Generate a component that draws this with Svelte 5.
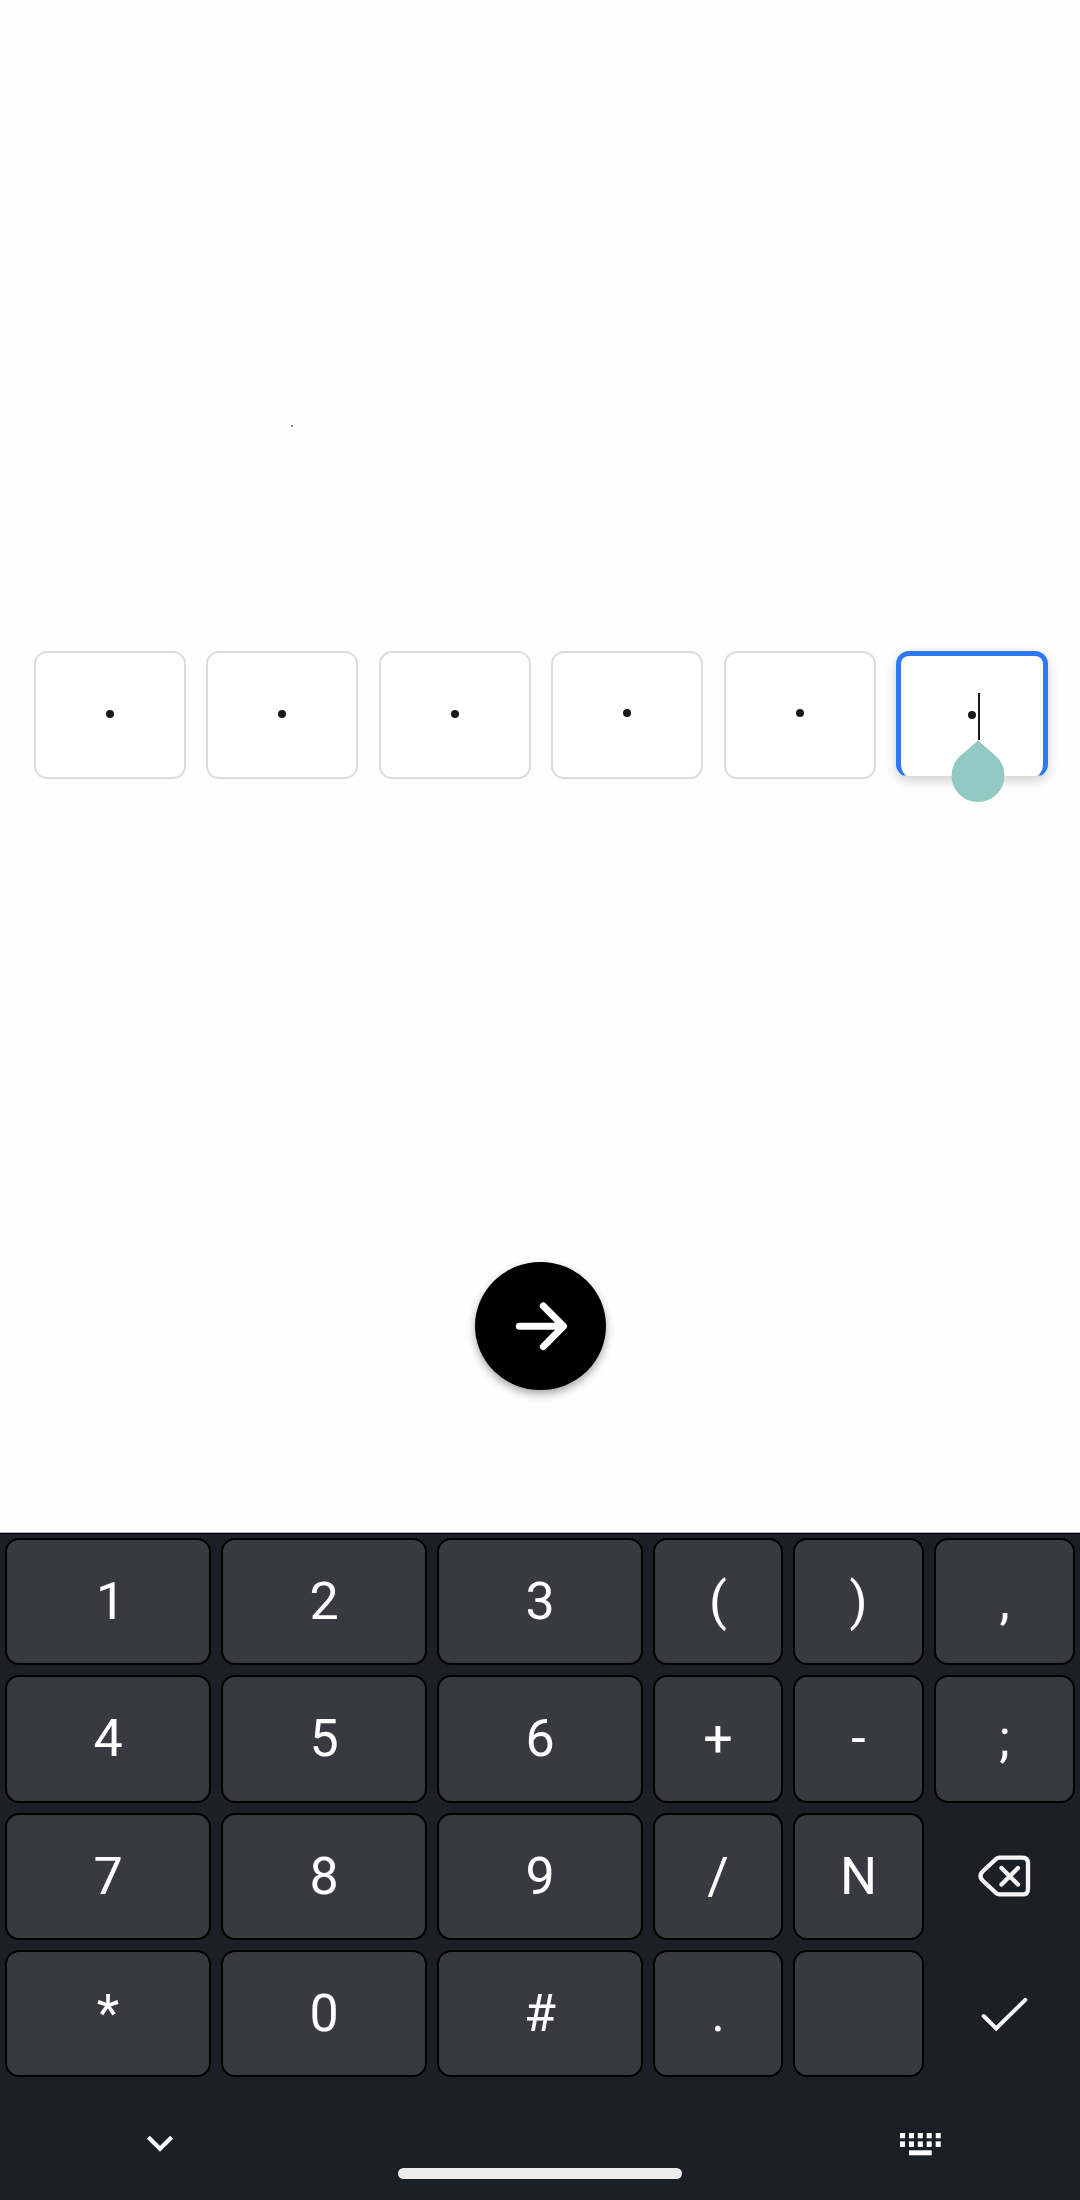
<script>
  // Cells whose dot sits one pixel above the others.
  const raised = [false, false, false, true, true, false];

  const keys = [
    '1', '2', '3', '(', ')', ',',
    '4', '5', '6', '+', '-', ';',
    '7', '8', '9', '/', 'N', 'backspace',
    '*', '0', '#', '.', '', 'done'
  ];

  const dotColumns = [0, 9, 17.8, 26.7, 35.7];
</script>

<main class="screen">
  <section class="form">
    <div class="message"><span class="speck"></span></div>

    <div class="code">
      {#each raised as up, i}
        <div class="cell" class:active={i === raised.length - 1}>
          <span class="dot" class:up></span>
          {#if i === raised.length - 1}
            <span class="caret"></span>
            <svg class="handle" width="54" height="63" viewBox="0 0 54 63">
              <path d="M27 .5 45.740 16.760A26.5 26.5 0 1 1 8.260 16.760Z" fill="#92c9c3" />
            </svg>
          {/if}
        </div>
      {/each}
    </div>

    <button class="next" aria-label="Next">
      <svg width="60" height="60" viewBox="0 0 60 60">
        <path d="M8.3 30.3H52M32.3 10l20.2 20.3-20.2 20.3" />
      </svg>
    </button>
  </section>

  <section class="keyboard">
    <div class="keys">
      {#each keys as key}
        {#if key === 'backspace'}
          <button class="key plain" aria-label="Backspace">
            <svg width="54" height="44" viewBox="0 0 54 44">
              <path d="M21.5 3.6H44.5Q50 3.6 50 9.1V34.9Q50 40.4 44.5 40.4H21.5Q19.500 40.4 18 39L4.600 26.500Q.400 22 4.600 17.500L18 5Q19.500 3.600 21.500 3.600Z" />
              <path d="M23.500 14l16.500 16.500M40 14l-16.500 16.500" />
            </svg>
          </button>
        {:else if key === 'done'}
          <button class="key plain" aria-label="Done">
            <svg width="54" height="44" viewBox="0 0 54 44">
              <path class="check" d="M5.700 24 18.200 36.500 47.300 7.800" />
            </svg>
          </button>
        {:else}
          <button class="key" class:one={key === '1'}>{key}</button>
        {/if}
      {/each}
    </div>

    <div class="toolbar">
      <svg width="30" height="20" viewBox="0 0 30 20">
        <path class="chevron" d="M3.300 3.300 15 14.700 26.700 3.300" />
      </svg>
      <svg class="switcher" width="41" height="23" viewBox="0 0 41 23">
        {#each dotColumns as x}
          <rect {x} y="0" width="5" height="5.300" />
          <rect {x} y="8.400" width="5" height="5.500" />
        {/each}
        <rect x="9" y="17.300" width="22.700" height="5" />
      </svg>
    </div>
    <div class="home"></div>
  </section>
</main>

<style>
  :global(body) {
    margin: 0;
    background: #fefefe;
  }

  .screen {
    display: flex;
    flex-direction: column;
    width: 1080px;
    height: 2200px;
    overflow: hidden;
    background: #fefefe;
    font-family: Roboto, sans-serif;
  }

  button {
    margin: 0;
    padding: 0;
    border: 0;
    font: inherit;
  }

  .form {
    display: flex;
    flex-direction: column;
    align-items: center;
    box-sizing: border-box;
    height: 1532px;
  }

  .message {
    box-sizing: border-box;
    width: 100%;
    height: 651px;
    padding: 425px 0 0 291px;
  }

  .speck {
    display: block;
    width: 2px;
    height: 2px;
    background: #888;
  }

  .code {
    display: grid;
    grid-template-columns: repeat(6, 1fr);
    column-gap: 20.700px;
    width: 1014px;
    height: 128px;
    margin-left: 2px;
  }

  .cell {
    position: relative;
    display: flex;
    align-items: center;
    justify-content: center;
    box-sizing: border-box;
    height: 128px;
    border: 2px solid #dcdcdc;
    border-radius: 13px;
    background: #fff;
  }

  .cell.active {
    height: 126px;
    border: 5px solid #2f79f5;
    border-bottom: 1px solid #dcdcdc;
    box-shadow: 0 4px 12px rgba(0, 0, 0, 0.18);
  }

  .dot {
    width: 8px;
    height: 8px;
    margin-bottom: 2px;
    border-radius: 50%;
    background: #17181a;
  }

  .dot.up {
    margin-bottom: 4px;
  }

  .active .dot {
    margin-left: 3px;
  }

  .caret {
    width: 2px;
    height: 47px;
    margin-left: 2px;
    background: #17181a;
  }

  .handle {
    position: absolute;
    left: 49.500px;
    top: 84px;
  }

  .next {
    display: flex;
    align-items: center;
    justify-content: center;
    width: 131px;
    height: 128px;
    margin: 483px 0 0 1px;
    border-radius: 50%;
    background: #000;
    box-shadow: 0 4px 9px rgba(0, 0, 0, 0.35);
  }

  .next path {
    fill: none;
    stroke: #fff;
    stroke-width: 7;
    stroke-linecap: round;
    stroke-linejoin: round;
  }

  .keyboard {
    display: flex;
    flex-direction: column;
    box-sizing: border-box;
    height: 668px;
    border-top: 1px solid #b5b5b5;
    background: #1d1f26;
    box-shadow: inset 0 1px 0 #000;
  }

  .keys {
    display: grid;
    grid-template-columns: 206px 206px 206px 130px 131px 141px;
    grid-auto-rows: 127.300px;
    gap: 10px;
    padding: 5px 5px 0;
  }

  .key {
    display: flex;
    align-items: center;
    justify-content: center;
    padding-top: 1px;
    border: 2px solid #000;
    border-radius: 14px;
    background: #393a3f;
    color: #fff;
    font-size: 52px;
    line-height: 60px;
  }

  /* The glyph sits left of its advance box. */
  .key.one {
    padding-left: 5px;
  }

  .key.plain {
    padding-top: 0;
    border-color: transparent;
    background: none;
  }

  .plain path {
    fill: none;
    stroke: #f5f5f5;
    stroke-width: 4.300;
    stroke-linecap: round;
    stroke-linejoin: round;
  }

  .plain .check {
    stroke-width: 4;
    stroke-linejoin: miter;
  }

  .toolbar {
    display: flex;
    justify-content: space-between;
    align-items: center;
    height: 30px;
    margin-top: 52px;
    padding: 0 139px 0 145px;
  }

  .chevron {
    fill: none;
    stroke: #fff;
    stroke-width: 4.200;
  }

  .switcher {
    fill: #fff;
  }

  .home {
    width: 284px;
    height: 11px;
    margin: 9px auto 0;
    border-radius: 6px;
    background: #ececec;
  }
</style>
